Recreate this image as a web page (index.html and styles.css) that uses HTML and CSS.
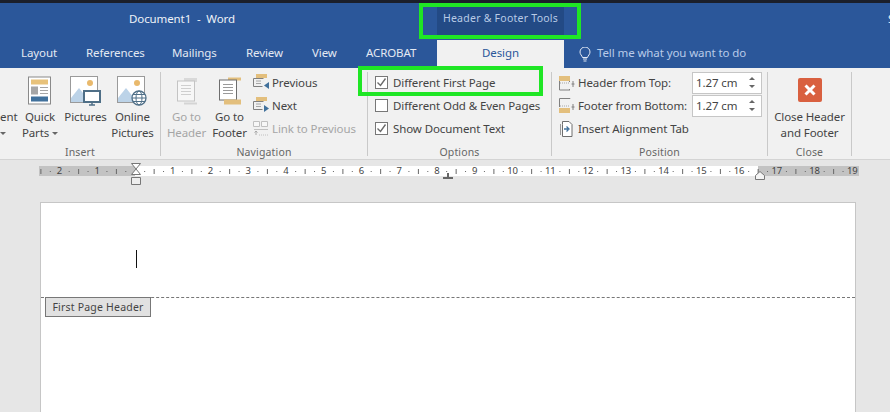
FILE: index.html
```html
<!DOCTYPE html>
<html lang="en">
<head>
<meta charset="utf-8">
<title>Document1 - Word</title>
<link rel="stylesheet" href="styles.css">
</head>
<body>
<div class="app">
  <header class="titlebar">
    <div class="doc-title">Document1 &nbsp;-&nbsp; Word</div>
    <div class="context-title">Header &amp; Footer Tools</div>
    <div class="signin">S</div>
  </header>
  <nav class="tabs">
    <span class="tab t-layout">Layout</span>
    <span class="tab t-refs">References</span>
    <span class="tab t-mail">Mailings</span>
    <span class="tab t-review">Review</span>
    <span class="tab t-view">View</span>
    <span class="tab t-acro">ACROBAT</span>
    <span class="tab-active">Design</span>
    <span class="tell">
      <svg class="bulb" width="12" height="15" viewBox="0 0 12 15"><path d="M3.5 10.5C3 8.5 1 7.500 1 5a5 5 0 0 1 10 0c0 2.500-2 3.500-2.500 5.500z" fill="none" stroke="#e4ebf6"/><path d="M4 12h4M4.500 14h3" stroke="#e4ebf6"/></svg>
      Tell me what you want to do
    </span>
  </nav>

  <section class="ribbon">
    <div class="group g-insert">
      <div class="group-body end">
        <div class="big cut"><span class="cut-label">ent<br><i class="caret cut-caret"></i></span></div>
        <div class="big w-quick">
          <svg class="big-icon" width="24" height="29" viewBox="0 0 24 29"><rect x=".5" y=".5" width="22" height="27" fill="#fff" stroke="#8a8a8a"/><rect x="3" y="3" width="17" height="5" fill="#e8c27a"/><rect x="3" y="10" width="7" height="8" fill="#a6a6a6"/><path d="M12 11h8M12 14h8M12 17h8" stroke="#a6a6a6"/><rect x="3" y="20" width="17" height="5" fill="#41719c"/></svg>
          <span class="big-label">Quick<br>Parts <i class="caret"></i></span>
        </div>
        <div class="big w-pic">
          <svg class="big-icon" width="31" height="30" viewBox="0 0 31 30"><rect x=".5" y=".5" width="27" height="26" fill="#fff" stroke="#9a9a9a"/><circle cx="20" cy="7" r="3" fill="#e9b96c"/><path d="M1 26V22L9 12l8 10v4z" fill="#bcd3e8"/><rect x="14" y="15" width="16" height="11" fill="#fff" stroke="#4f6f87" stroke-width="2"/><path d="M19 29h6M22 26v3" stroke="#4f6f87" stroke-width="1.500"/></svg>
          <span class="big-label">Pictures</span>
        </div>
        <div class="big w-online">
          <svg class="big-icon" width="31" height="30" viewBox="0 0 31 30"><rect x=".5" y=".5" width="27" height="26" fill="#fff" stroke="#9a9a9a"/><circle cx="20" cy="7" r="3" fill="#e9b96c"/><path d="M1 26V22L9 12l8 10v4z" fill="#bcd3e8"/><circle cx="22" cy="22" r="7" fill="#fff" stroke="#4f6f87" stroke-width="1.300"/><ellipse cx="22" cy="22" rx="3" ry="7" fill="none" stroke="#4f6f87"/><path d="M15 22h14M16 18.500h12M16 25.500h12" stroke="#4f6f87"/></svg>
          <span class="big-label">Online<br>Pictures</span>
        </div>
      </div>
      <div class="group-label">Insert</div>
    </div>

    <div class="group g-nav">
      <div class="group-body">
        <div class="big w-goto disabled">
          <svg class="big-icon" width="24" height="29" viewBox="0 0 24 29"><path d="M9 1.500h13v4h-13z" fill="#d9d9d9"/><rect x="2.500" y="4.500" width="17" height="20" fill="#f7f7f7" stroke="#c4c4c4"/><path d="M6 9h10M6 12h10M6 15h10M6 18h10" stroke="#cfcfcf"/><path d="M9 27h13" stroke="#d4d4d4" stroke-width="2"/></svg>
          <span class="big-label">Go to<br>Header</span>
        </div>
        <div class="big w-goto">
          <svg class="big-icon" width="24" height="29" viewBox="0 0 24 29"><path d="M10 1h13v3h-13z" fill="#e3bf7d"/><rect x="1.500" y="3.500" width="17" height="20" fill="#fff" stroke="#6e6e6e"/><path d="M5 8h10M5 11h10M5 14h10M5 17h10" stroke="#9a9a9a"/><rect x="6" y="23" width="17" height="5" fill="#e3bf7d"/></svg>
          <span class="big-label">Go to<br>Footer</span>
        </div>
        <div class="small-col nav-col">
          <div class="row">
            <svg width="16" height="16" viewBox="0 0 16 16"><rect x="3" y="0" width="11" height="4" fill="#e3bf7d"/><path d="M.5 4.500h10M.5 4.500v8h9" fill="none" stroke="#808080"/><path d="M3 7h5M3 9.500h5" stroke="#a6a6a6"/><path d="M16 8v7l-5-3.500z" fill="#41719c"/></svg>
            <span>Previous</span>
          </div>
          <div class="row">
            <svg width="16" height="16" viewBox="0 0 16 16"><rect x="3" y="0" width="11" height="4" fill="#e3bf7d"/><path d="M.5 4.500h10M.5 4.500v8h9" fill="none" stroke="#808080"/><path d="M3 7h5M3 9.500h5" stroke="#a6a6a6"/><path d="M11 8v7l5-3.500z" fill="#41719c"/></svg>
            <span>Next</span>
          </div>
          <div class="row disabled">
            <svg width="16" height="16" viewBox="0 0 16 16"><path d="M.5 1.500h6v5h-6zM8.500 1.500h6v5h-6z" fill="#f7f7f7" stroke="#c0c0c0"/><path d="M1 9.500h14" stroke="#c0c0c0"/><path d="M3 15v-4M1.500 12.500L3 11l1.500 1.500" fill="none" stroke="#a8a8a8"/><path d="M6 15h9" stroke="#c0c0c0" stroke-dasharray="1 1"/></svg>
            <span>Link to Previous</span>
          </div>
        </div>
      </div>
      <div class="group-label">Navigation</div>
    </div>

    <div class="group g-options">
      <div class="group-body">
        <div class="small-col opt-col">
          <div class="row">
            <span class="check on"><svg width="11" height="11" viewBox="0 0 11 11"><path d="M1.500 5.500l3 3 5-7" fill="none" stroke="#6a6a6a" stroke-width="1.400"/></svg></span>
            <span>Different First Page</span>
          </div>
          <div class="row">
            <span class="check"></span>
            <span>Different Odd &amp; Even Pages</span>
          </div>
          <div class="row">
            <span class="check on"><svg width="11" height="11" viewBox="0 0 11 11"><path d="M1.500 5.500l3 3 5-7" fill="none" stroke="#6a6a6a" stroke-width="1.400"/></svg></span>
            <span>Show Document Text</span>
          </div>
        </div>
      </div>
      <div class="group-label">Options</div>
    </div>

    <div class="group g-position">
      <div class="group-body">
        <div class="small-col pos-col">
          <div class="row">
            <svg class="pos-icon" width="17" height="16" viewBox="0 0 17 16"><rect x="0" y="1" width="11" height="5" fill="#e3bf7d"/><path d="M.5 6v9M.5 15h10.500M10.500 6v1M10.500 14v1" fill="none" stroke="#808080"/><path d="M1 8h10" stroke="#a6a6a6" stroke-dasharray="1 1"/><path d="M14 6v6M12.500 9h3" stroke="#808080"/></svg>
            <span class="pos-text">Header from Top:</span>
            <span class="spin"><span>1.27 cm</span><i class="arrows"><b class="up"></b><b class="down"></b></i></span>
          </div>
          <div class="row">
            <svg class="pos-icon" width="17" height="16" viewBox="0 0 17 16"><path d="M.5 9V.5h10.500V1" fill="none" stroke="#808080"/><rect x="0" y="10" width="11" height="5" fill="#e3bf7d"/><path d="M1 8h10" stroke="#a6a6a6" stroke-dasharray="1 1"/><path d="M14 6v6M12.500 9h3" stroke="#808080"/></svg>
            <span class="pos-text">Footer from Bottom:</span>
            <span class="spin"><span>1.27 cm</span><i class="arrows"><b class="up"></b><b class="down"></b></i></span>
          </div>
          <div class="row">
            <svg class="pos-icon" width="17" height="16" viewBox="0 0 17 16"><path d="M3.500 3.500V15.500H13V3.500L10 .5H3.500z" fill="#fff" stroke="#6e6e6e"/><path d="M1.500 3v11" stroke="#9a9a9a"/><path d="M5 8h4M7.500 5.500L10 8l-2.500 2.500" fill="none" stroke="#41719c" stroke-width="1.300"/></svg>
            <span>Insert Alignment Tab</span>
          </div>
        </div>
      </div>
      <div class="group-label">Position</div>
    </div>

    <div class="group g-close">
      <div class="group-body center">
        <div class="big w-close">
          <span class="close-icon"><svg width="14" height="14" viewBox="0 0 14 14"><path d="M2.500 2.500l9 9M11.500 2.500l-9 9" stroke="#fff" stroke-width="3"/></svg></span>
          <span class="big-label">Close Header<br>and Footer</span>
        </div>
      </div>
      <div class="group-label">Close</div>
    </div>
  </section>

  <section class="ruler-area">
    <div class="ruler">
      <span>2</span><span>1</span><span class="blank"></span><span>1</span><span>2</span><span>3</span><span>4</span><span>5</span><span>6</span><span>7</span><span>8</span><span>9</span><span>10</span><span>11</span><span>12</span><span>13</span><span>14</span><span>15</span><span>16</span><span>17</span><span>18</span><span>19</span>
      <svg class="marker m-left" width="10" height="22" viewBox="0 0 10 22"><path d="M.5 .5h9L5 6l4.500 5.500H.5L5 6z" fill="#fff" stroke="#777"/><path d="M.5 14.500h9v7h-9z" fill="#eee" stroke="#777"/></svg>
      <svg class="marker m-tab" width="10" height="6" viewBox="0 0 10 6"><path d="M4 0h2v4h4v2H0V4h4z" fill="#666"/></svg>
      <svg class="marker m-right" width="10" height="9" viewBox="0 0 10 9"><path d="M5 .5L9.500 4.500v4H.5v-4z" fill="#f4f4f4" stroke="#777"/></svg>
    </div>
  </section>

  <main class="workspace">
    <div class="page">
      <div class="header-zone"><i class="cursor"></i></div>
      <div class="header-line"><span class="header-tag">First Page Header</span></div>
    </div>
  </main>

  <div class="hl hl-tools"></div>
  <div class="hl hl-first"></div>
</div>
</body>
</html>
```

FILE: styles.css
```css
* { box-sizing: border-box; }
html, body { margin: 0; padding: 0; height: 100%; overflow: hidden; }
body { font-family: "Noto Sans", "Open Sans", sans-serif; font-size: 11.5px; letter-spacing: -.1px; color: #444; }
.app { position: relative; width: 890px; height: 412px; overflow: hidden; display: flex; flex-direction: column; background: #e6e6e6; }

.titlebar { height: 40px; flex: none; background: #2b579a; border-top: 3px solid #1b1f2a; display: flex; color: #eef2f8; overflow: hidden; }
.titlebar > div { flex: none; }
.doc-title { width: 437px; padding: 8px 0 0 129px; white-space: nowrap; }
.context-title { width: 127px; height: 33px; background: #234a85; color: #b9cbe6; text-align: center; padding-top: 8px; font-size: 10.5px; letter-spacing: .25px; white-space: nowrap; }
.signin { margin-left: 324px; padding-top: 8px; white-space: nowrap; }

.tabs { height: 28px; flex: none; background: #2b579a; display: flex; align-items: stretch; color: #e3e9f3; padding-left: 21px; white-space: nowrap; }
.tab { padding-top: 5px; flex: none; }
.t-layout { width: 65px; }
.t-refs { width: 86px; }
.t-mail { width: 74px; }
.t-review { width: 66px; }
.t-view { width: 54px; }
.t-acro { width: 71px; }
.tab-active { flex: none; width: 127px; background: #f1f1f1; color: #2b579a; text-align: center; padding-top: 5px; }
.tell { margin-left: 15px; padding-top: 5px; color: #b9cbe9; display: flex; gap: 6px; align-items: flex-start; }
.bulb { margin-top: 2px; }

.ribbon { height: 92px; flex: none; background: #f1f1f1; border-bottom: 1px solid #d4d4d4; display: flex; padding-top: 4px; white-space: nowrap; }
.group { flex: none; display: flex; flex-direction: column; height: 84px; border-right: 1px solid #c9c9c9; }
.group-body { height: 74px; flex: none; display: flex; }
.group-body.end { justify-content: flex-end; }
.group-body.center { justify-content: center; }
.group-label { height: 10px; text-align: center; color: #666; font-size: 10.5px; line-height: 13px; letter-spacing: .15px; }
.g-insert { width: 161px; }
.g-nav { width: 207px; }
.g-options { width: 184px; }
.g-position { width: 216px; }
.g-close { width: 84px; }

.big { flex: none; display: flex; flex-direction: column; align-items: center; position: relative; height: 68px; padding-top: 4px; }
.big-icon { display: block; height: 30px; }
.big-label { position: absolute; top: 37px; left: -20px; right: -20px; text-align: center; line-height: 16px; }
.cut { width: 19px; padding: 0; align-items: flex-start; }
.cut-label { margin-top: 37px; line-height: 16px; width: 17px; }
.w-quick { width: 42px; }
.w-pic { width: 47px; margin-left: 1px; }
.w-online { width: 47px; margin-right: 4px; }
.w-goto { width: 43px; }
.g-nav .group-body { padding-left: 4px; }
.caret { display: inline-block; width: 0; height: 0; border: 3px solid transparent; border-top-color: #666; border-bottom: 0; vertical-align: 2px; }

.disabled, .disabled .big-label { color: #a6a6a6; }
.small-col { display: flex; flex-direction: column; gap: 0; margin-top: -1px; }
.row { height: 23px; display: flex; align-items: center; gap: 3px; }
.nav-col { margin-left: 2px; }
.nav-col .row { padding-bottom: 1px; }
.opt-col { padding-left: 7px; }
.opt-col .row { gap: 5px; }
.check { flex: none; width: 13px; height: 13px; border: 1px solid #777; background: #fff; display: flex; align-items: center; justify-content: center; }
.pos-col { padding-left: 7px; }
.pos-icon { flex: none; }
.pos-col .row { gap: 2px; }
.pos-text { width: 112px; }
.spin { width: 70px; height: 22px; border: 1px solid #c6c6c6; background: #fff; display: flex; align-items: center; justify-content: space-between; padding: 0 2px 0 3px; }
.arrows { display: flex; flex-direction: column; gap: 5px; margin-right: 4px; }
.arrows b { display: block; width: 0; height: 0; border: 3px solid transparent; }
.arrows .up { border-top: 0; border-bottom-color: #666; }
.arrows .down { border-bottom: 0; border-top-color: #666; }

.w-close { width: 84px; padding-top: 6px; }
.close-icon { width: 24px; height: 24px; border-radius: 2px; background: #d9603f; display: flex; align-items: center; justify-content: center; }

.ruler-area { height: 42px; flex: none; background: #e6e6e6; padding: 6px 0 0 39px; }
.ruler { position: relative; width: 820px; height: 10px; display: flex; padding-left: 1.7px; font-size: 9.5px; line-height: 10px; color: #444; letter-spacing: 0;
  background-color: #fff;
  background-image:
    linear-gradient(to right, #666 1px, transparent 1px),
    linear-gradient(to right, #666 1px, transparent 1px),
    linear-gradient(to right, #c3c3c3 96px, transparent 96px, transparent 719px, #c3c3c3 719px);
  background-repeat: repeat-x, repeat-x, no-repeat;
  background-size: 37.75px 5px, 18.875px 1px, 100% 100%;
  background-position: 1.4px 3px, 10.8px 5px, 0 0;
}
.ruler span { flex: none; width: 37.75px; text-align: center; }
.marker { position: absolute; }
.m-left { left: 92px; top: -3px; }
.m-tab { left: 404px; top: 7px; }
.m-right { left: 716px; top: 5px; }

.workspace { flex: 1; padding: 0 34px 0 40px; min-height: 0; }
.page { height: 230px; background: #fff; border: 1px solid #c6c6c6; border-bottom: 0; display: flex; flex-direction: column; }
.header-zone { height: 94px; padding: 47px 0 0 95px; }
.cursor { display: block; width: 1px; height: 18px; background: #111; }
.header-line { border-top: 1px dashed #777; padding-left: 4px; }
.header-tag { display: block; width: 106px; height: 20px; margin-top: -1px; background: #e1e1e1; border: 1px solid #777; font-size: 10.5px; line-height: 18px; text-align: center; letter-spacing: .2px; white-space: nowrap; }

.hl { position: absolute; border: 4px solid #1fe625; }
.hl-tools { left: 419px; top: 3px; width: 162px; height: 36px; }
.hl-first { left: 358px; top: 66px; width: 185px; height: 30px; }
```
